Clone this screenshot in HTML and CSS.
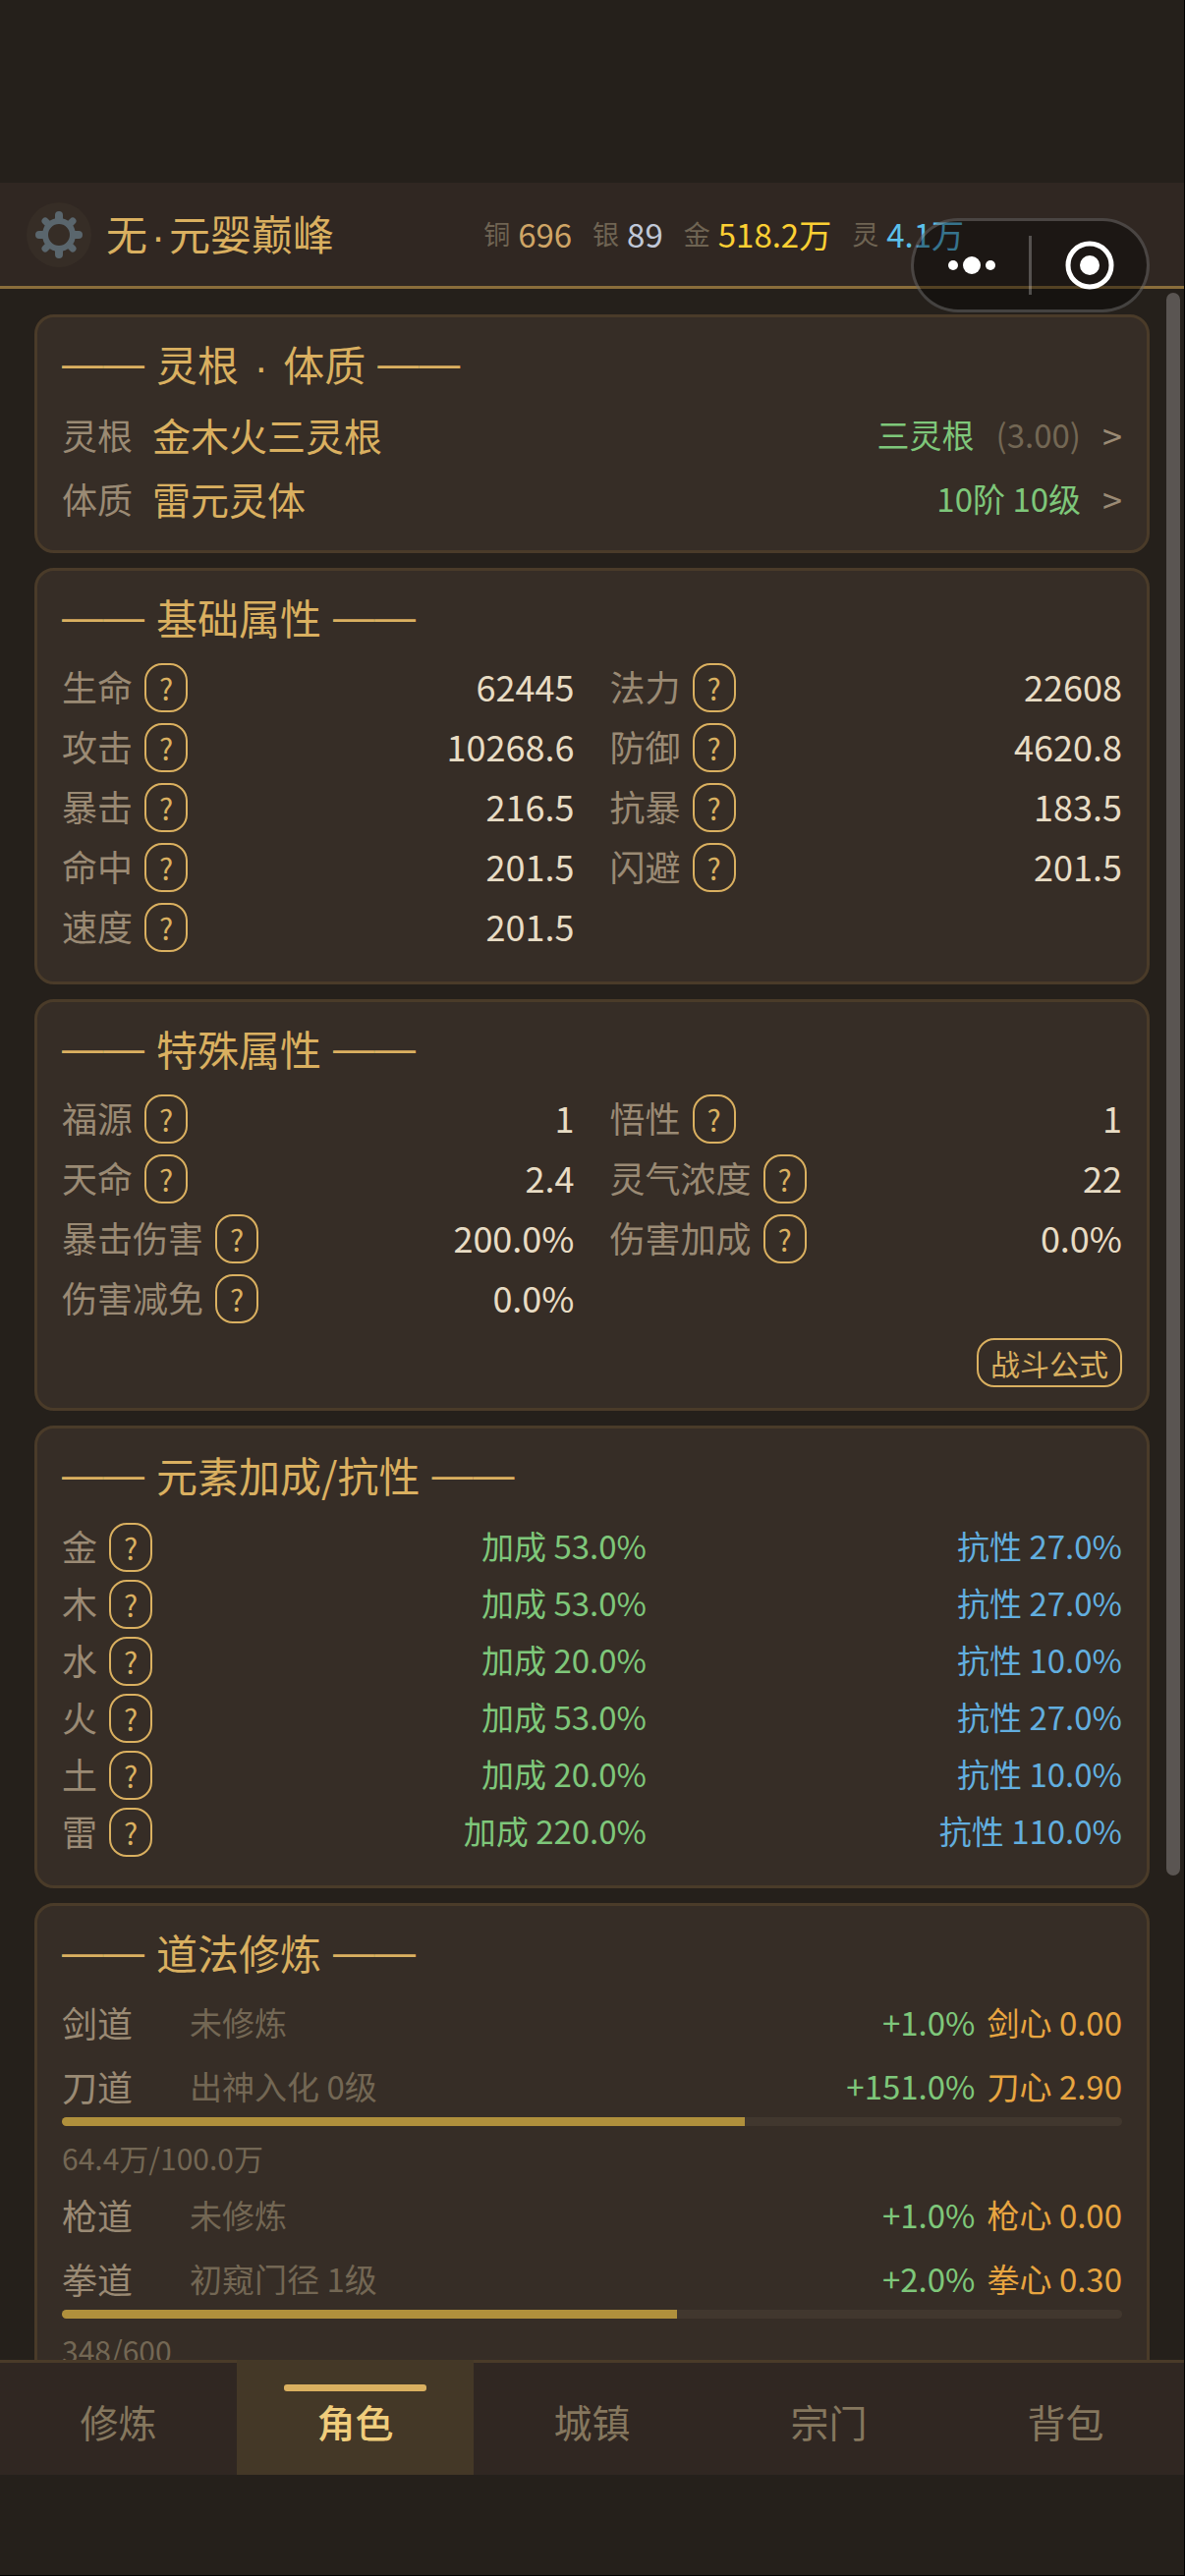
FILE: index.html
```html
<!DOCTYPE html>
<html lang="zh-CN">
<head>
  <meta charset="UTF-8">
  <meta name="viewport" content="width=device-width, initial-scale=1">
  <title>角色</title>
  <link rel="stylesheet" href="styles.css">
</head>
<body>
  <div class="app">

    <header class="topbar">
      <button type="button" class="settings" aria-label="设置">
        <svg width="50" height="50" viewBox="0 0 50 50" fill="none" stroke="#5a666d">
          <circle cx="25" cy="25" r="14" stroke-width="6"/>
          <g stroke-width="8" stroke-linecap="round">
            <path d="M25 9V5M25 41v4M9 25H5M41 25h4"/>
            <path stroke-width="7" d="M14 14l-3-3M36 14l3-3M14 36l-3 3M36 36l3 3"/>
          </g>
        </svg>
      </button>
      <h1 class="player">无<span class="dot">·</span>元婴巅峰</h1>
      <div class="wallet">
        <span class="coin"><small>铜</small><b class="copper">696</b></span>
        <span class="coin"><small>银</small><b class="silver">89</b></span>
        <span class="coin"><small>金</small><b class="gold">518.2万</b></span>
        <span class="coin"><small>灵</small><b class="spirit">4.1万</b></span>
      </div>
    </header>

    <div class="capsule">
      <button type="button" aria-label="更多">
        <svg width="52" height="20" viewBox="0 0 52 20" fill="#fff">
          <circle cx="7" cy="10" r="5"/>
          <circle cx="26" cy="10" r="9"/>
          <circle cx="45" cy="10" r="5"/>
        </svg>
      </button>
      <span class="capsule-line"></span>
      <button type="button" aria-label="关闭">
        <svg width="50" height="50" viewBox="0 0 50 50">
          <circle cx="25" cy="25" r="22" fill="none" stroke="#fff" stroke-width="5"/>
          <circle cx="25" cy="25" r="10" fill="#fff"/>
        </svg>
      </button>
    </div>

    <main class="content">
      <section class="card">
        <h2 class="title"><span class="dash">——</span><span>灵根<span class="dot"> · </span>体质</span><span class="dash">——</span></h2>
        <div class="row">
          <span class="label">灵根</span>
          <span class="root">金木火三灵根</span>
          <button type="button" class="more"><span class="green">三灵根</span><span class="dim">(3.00)</span><span class="arrow">&gt;</span></button>
        </div>
        <div class="row">
          <span class="label">体质</span>
          <span class="root">雷元灵体</span>
          <button type="button" class="more"><span class="green">10阶 10级</span><span class="arrow">&gt;</span></button>
        </div>
      </section>

      <section class="card">
        <h2 class="title"><span class="dash">——</span>基础属性<span class="dash">——</span></h2>
        <div class="stats">
          <div class="stat"><span class="label">生命</span><button type="button" class="help">?</button><span class="value">62445</span></div>
          <div class="stat"><span class="label">法力</span><button type="button" class="help">?</button><span class="value">22608</span></div>
          <div class="stat"><span class="label">攻击</span><button type="button" class="help">?</button><span class="value">10268.6</span></div>
          <div class="stat"><span class="label">防御</span><button type="button" class="help">?</button><span class="value">4620.8</span></div>
          <div class="stat"><span class="label">暴击</span><button type="button" class="help">?</button><span class="value">216.5</span></div>
          <div class="stat"><span class="label">抗暴</span><button type="button" class="help">?</button><span class="value">183.5</span></div>
          <div class="stat"><span class="label">命中</span><button type="button" class="help">?</button><span class="value">201.5</span></div>
          <div class="stat"><span class="label">闪避</span><button type="button" class="help">?</button><span class="value">201.5</span></div>
          <div class="stat"><span class="label">速度</span><button type="button" class="help">?</button><span class="value">201.5</span></div>
        </div>
      </section>

      <section class="card">
        <h2 class="title"><span class="dash">——</span>特殊属性<span class="dash">——</span></h2>
        <div class="stats">
          <div class="stat"><span class="label">福源</span><button type="button" class="help">?</button><span class="value">1</span></div>
          <div class="stat"><span class="label">悟性</span><button type="button" class="help">?</button><span class="value">1</span></div>
          <div class="stat"><span class="label">天命</span><button type="button" class="help">?</button><span class="value">2.4</span></div>
          <div class="stat"><span class="label">灵气浓度</span><button type="button" class="help">?</button><span class="value">22</span></div>
          <div class="stat"><span class="label">暴击伤害</span><button type="button" class="help">?</button><span class="value">200.0%</span></div>
          <div class="stat"><span class="label">伤害加成</span><button type="button" class="help">?</button><span class="value">0.0%</span></div>
          <div class="stat"><span class="label">伤害减免</span><button type="button" class="help">?</button><span class="value">0.0%</span></div>
        </div>
        <div class="actions">
          <button type="button" class="formula">战斗公式</button>
        </div>
      </section>

      <section class="card">
        <h2 class="title"><span class="dash">——</span>元素加成/抗性<span class="dash">——</span></h2>
        <ul class="elements">
          <li><div class="element"><span class="label">金</span><button type="button" class="help">?</button></div><span class="green">加成 53.0%</span><span class="blue">抗性 27.0%</span></li>
          <li><div class="element"><span class="label">木</span><button type="button" class="help">?</button></div><span class="green">加成 53.0%</span><span class="blue">抗性 27.0%</span></li>
          <li><div class="element"><span class="label">水</span><button type="button" class="help">?</button></div><span class="green">加成 20.0%</span><span class="blue">抗性 10.0%</span></li>
          <li><div class="element"><span class="label">火</span><button type="button" class="help">?</button></div><span class="green">加成 53.0%</span><span class="blue">抗性 27.0%</span></li>
          <li><div class="element"><span class="label">土</span><button type="button" class="help">?</button></div><span class="green">加成 20.0%</span><span class="blue">抗性 10.0%</span></li>
          <li><div class="element"><span class="label">雷</span><button type="button" class="help">?</button></div><span class="green">加成 220.0%</span><span class="blue">抗性 110.0%</span></li>
        </ul>
      </section>

      <section class="card">
        <h2 class="title"><span class="dash">——</span>道法修炼<span class="dash">——</span></h2>
        <div class="arts">
          <div class="art">
            <div class="art-row"><span class="label">剑道</span><span class="dim">未修炼</span><span class="green">+1.0%</span><span class="orange">剑心 0.00</span></div>
          </div>
          <div class="art">
            <div class="art-row"><span class="label">刀道</span><span class="dim">出神入化 0级</span><span class="green">+151.0%</span><span class="orange">刀心 2.90</span></div>
            <div class="bar"><div class="bar-fill" style="width: 64.4%"></div></div>
            <div class="progress-text">64.4万/100.0万</div>
          </div>
          <div class="art">
            <div class="art-row"><span class="label">枪道</span><span class="dim">未修炼</span><span class="green">+1.0%</span><span class="orange">枪心 0.00</span></div>
          </div>
          <div class="art">
            <div class="art-row"><span class="label">拳道</span><span class="dim">初窥门径 1级</span><span class="green">+2.0%</span><span class="orange">拳心 0.30</span></div>
            <div class="bar"><div class="bar-fill" style="width: 58%"></div></div>
            <div class="progress-text">348/600</div>
          </div>
        </div>
      </section>

      <div class="scrollbar"></div>
    </main>

    <nav class="tabs">
      <a href="#">修炼</a>
      <a href="#" class="active">角色</a>
      <a href="#">城镇</a>
      <a href="#">宗门</a>
      <a href="#">背包</a>
    </nav>

  </div>
</body>
</html>
```
FILE: styles.css
```css
* {
  box-sizing: border-box;
}
body {
  margin: 0;
  background: #25201b;
  color: #e8dcc4;
  font-family: "Noto Sans CJK SC", sans-serif;
  font-size: 33px;
}
button {
  padding: 0;
  border: none;
  background: none;
  color: inherit;
  font: inherit;
  cursor: pointer;
}
svg {
  display: block;
}
.app {
  position: relative;
  display: flex;
  flex-direction: column;
  height: 100vh;
  padding: 186px 0 102px;
  border-right: 1px solid #000;
  border-bottom: 1px solid #000;
}

/* top bar */
.topbar {
  display: flex;
  align-items: center;
  height: 108px;
  padding: 0 224px 0 27px;
  background: #302722;
  border-bottom: 3px solid #8a6d3b;
}
.settings {
  display: flex;
  align-items: center;
  justify-content: center;
  width: 66px;
  height: 66px;
  border-radius: 50%;
  background: #362d26;
}
.player {
  margin: 0 0 0 15px;
  padding-bottom: 4px;
  color: #dab060;
  font-size: 42px;
  font-weight: 400;
  white-space: nowrap;
}
/* narrow middle dot, the CJK one is full width */
.dot {
  margin: 0 4px;
  font-family: "Liberation Sans", sans-serif;
}
.wallet {
  display: flex;
  gap: 21px;
  margin-left: auto;
  padding-bottom: 2px;
  white-space: nowrap;
}
.coin {
  display: flex;
  align-items: center;
  gap: 8px;
}
.coin small {
  color: #6f6453;
  font-size: 27px;
}
.coin b {
  font-weight: 400;
}
.copper { color: #cfa566; }
.silver { color: #c0c8d8; }
.gold { color: #fdd033; }
.spirit { color: #5bc0eb; }

.capsule {
  position: absolute;
  top: 222px;
  right: 35px;
  z-index: 2;
  display: flex;
  align-items: center;
  width: 243px;
  height: 96px;
  border: 3px solid rgba(255, 255, 255, 0.2);
  border-radius: 48px;
  background: rgba(0, 0, 0, 0.4);
}
.capsule button {
  display: flex;
  flex: 1;
  justify-content: center;
}
.capsule-line {
  width: 3px;
  height: 60px;
  background: rgba(255, 255, 255, 0.25);
}

/* cards */
.content {
  position: relative;
  flex: 1;
  display: flex;
  flex-direction: column;
  gap: 15px;
  min-height: 0;
  padding: 26px 35px 0;
  overflow: hidden;
}
.card {
  flex-shrink: 0;
  padding: 18px 25px 19px;
  border: 3px solid #4a3b29;
  border-radius: 20px;
  background: #362d26;
}
.title {
  display: flex;
  gap: 12px;
  height: 58px;
  margin: 0 0 12px;
  color: #dab060;
  font-size: 42px;
  font-weight: 400;
  line-height: 58px;
}
.dash {
  font-family: "Liberation Sans", sans-serif;
}
.label,
.value,
.root,
.green,
.blue,
.orange,
.dim,
.arrow {
  padding-bottom: 4px;
}
.label {
  color: #9a8a74;
  font-size: 36px;
}
.green { color: #7ec77a; }
.blue { color: #62aedf; }
.orange { color: #e8a540; }
.dim { color: #736754; }

.row {
  display: flex;
  align-items: center;
  gap: 20px;
  height: 65px;
}
.root {
  color: #dab060;
  font-size: 39px;
}
.more {
  display: flex;
  align-items: center;
  gap: 22px;
  margin-left: auto;
}
.arrow {
  color: #9a8a74;
  font-size: 36px;
}

.stats {
  display: grid;
  grid-template-columns: 1fr 1fr;
  column-gap: 36px;
  padding-bottom: 6px;
}
.stat {
  display: flex;
  align-items: center;
  gap: 12px;
  height: 61px;
}
.value {
  margin-left: auto;
  font-size: 36px;
}
.help,
.formula {
  height: 50px;
  border: 2px solid #dab060;
  border-radius: 18px;
  color: #dab060;
  font-size: 30px;
  line-height: 42px;
}
.help {
  width: 44px;
}
.formula {
  padding: 0 12px;
}
.actions {
  display: flex;
  justify-content: flex-end;
  padding: 4px 0 2px;
}

.elements {
  margin: 0;
  padding: 4px 0 6px;
  list-style: none;
}
.elements li {
  display: flex;
  align-items: center;
  justify-content: space-between;
  height: 58px;
}
.element {
  display: flex;
  align-items: center;
  gap: 12px;
  min-width: 111px;
}

.arts {
  display: flex;
  flex-direction: column;
  gap: 5px;
  padding-top: 2px;
}
.art-row {
  display: flex;
  align-items: center;
  gap: 12px;
  height: 60px;
}
.art-row .label {
  min-width: 118px;
}
.art-row .green {
  margin-left: auto;
}
.bar {
  height: 9px;
  margin-bottom: 12px;
  border-radius: 5px;
  background: #41372e;
  overflow: hidden;
}
.bar-fill {
  height: 100%;
  background: #b0903c;
}
.progress-text {
  padding-bottom: 4px;
  color: #736754;
  font-size: 30px;
  line-height: 41px;
}

.scrollbar {
  position: absolute;
  top: 4px;
  right: 4px;
  width: 14px;
  height: 1611px;
  border-radius: 7px;
  background: #5a5552;
}

/* bottom tabs */
.tabs {
  display: flex;
  height: 117px;
  background: #302722;
  border-top: 3px solid #4a3b29;
}
.tabs a {
  position: relative;
  flex: 1;
  display: flex;
  align-items: center;
  justify-content: center;
  padding-top: 3px;
  color: #85775e;
  font-size: 39px;
  text-decoration: none;
}
.tabs .active {
  margin-top: -3px;
  padding-top: 6px;
  background: #443827;
  color: #f0cd7c;
  font-weight: 500;
}
.tabs .active::before {
  content: "";
  position: absolute;
  top: 25px;
  left: 20%;
  width: 60%;
  height: 7px;
  border-radius: 3px;
  background: #dab060;
}
```
